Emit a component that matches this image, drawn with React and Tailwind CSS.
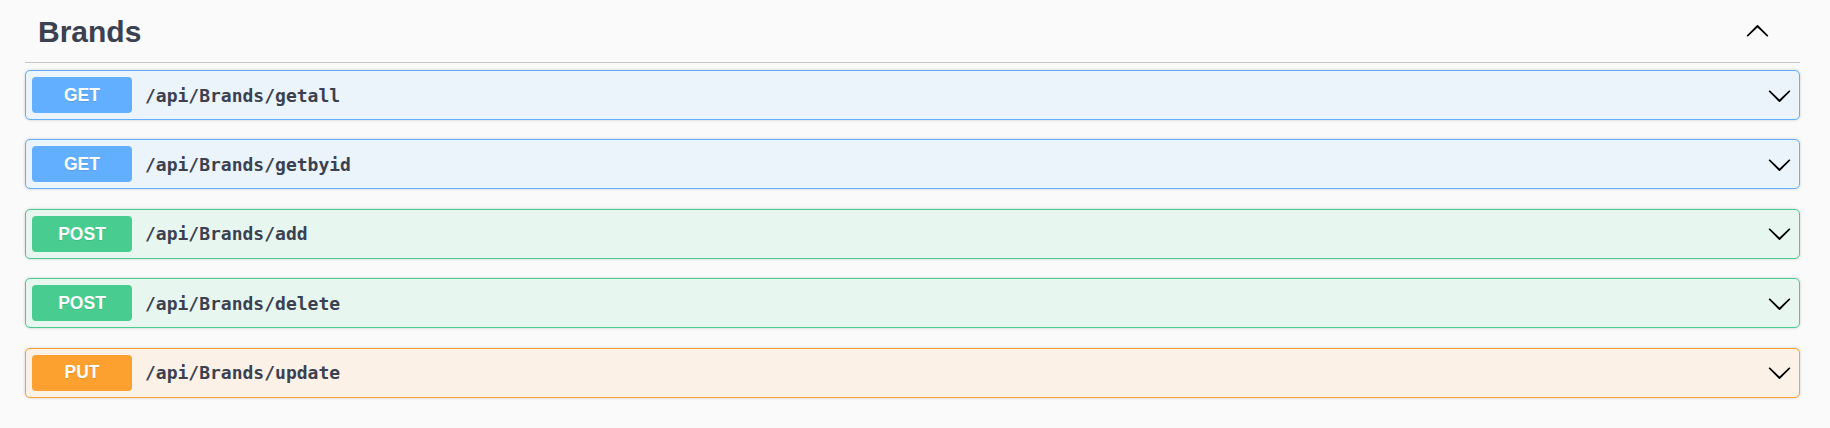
const endpoints = [
  { method: "GET", path: "/api/Brands/getall" },
  { method: "GET", path: "/api/Brands/getbyid" },
  { method: "POST", path: "/api/Brands/add" },
  { method: "POST", path: "/api/Brands/delete" },
  { method: "PUT", path: "/api/Brands/update" },
];

const styles = {
  GET: { block: "bg-[#ebf3fb] border-[#61affe]", badge: "bg-[#61affe]" },
  POST: { block: "bg-[#e8f6f0] border-[#49cc90]", badge: "bg-[#49cc90]" },
  PUT: { block: "bg-[#fbf1e6] border-[#fca130]", badge: "bg-[#fca130]" },
};

const Arrow = ({ className = "" }) => (
  <svg width="25" height="25" viewBox="0 0 20 20" className={className} aria-hidden="true">
    <path
      fill="#000"
      d="M17.418 6.109c.272-.268.709-.268.979 0s.271.701 0 .969l-7.908 7.83c-.27.268-.707.268-.979 0l-7.908-7.83c-.27-.268-.27-.701 0-.969.271-.268.709-.268.979 0L10 13.25l7.418-7.141z"
    />
  </svg>
);

const Operation = ({ method, path }) => {
  const s = styles[method];
  return (
    <div
      className={`flex items-center h-[50px] p-[6px] pr-[7px] border rounded-[5px] shadow-[0_0_3px_rgba(0,0,0,0.19)] ${s.block}`}
    >
      <span
        className={`w-[100px] h-[36px] flex items-center justify-center rounded-[4px] text-white font-bold text-[17.5px] [text-shadow:0_1px_0_rgba(0,0,0,0.1)] ${s.badge}`}
        style={{ fontFamily: '"Liberation Sans", Arial, sans-serif' }}
      >
        {method}
      </span>
      <span
        className="ml-[13px] flex-1 text-[18px] font-bold text-[#3b4151]"
        style={{ fontFamily: '"DejaVu Sans Mono", "Liberation Mono", monospace' }}
      >
        {path}
      </span>
      <Arrow />
    </div>
  );
};

export default function App() {
  return (
    <div className="min-h-screen bg-[#fafafa] pl-[25px] pr-[30px]">
      <div className="flex items-center h-[63px] border-b border-[#c4c6cb] pl-[13px] pr-[30px]">
        <h3
          className="flex-1 text-[30px] leading-[30px] font-bold text-[#3b4151] pt-[2px]"
          style={{ fontFamily: '"Liberation Sans", Arial, sans-serif' }}
        >
          Brands
        </h3>
        <Arrow className="rotate-180" />
      </div>
      <div className="flex flex-col gap-[19.4px] mt-[7px]">
        {endpoints.map((e) => (
          <Operation key={e.path} {...e} />
        ))}
      </div>
    </div>
  );
}
